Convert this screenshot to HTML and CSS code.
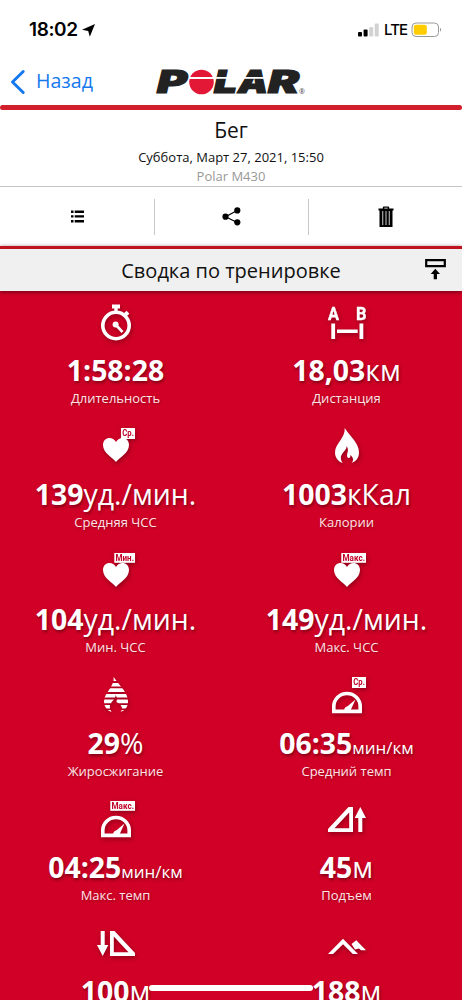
FILE: index.html
```html
<!DOCTYPE html>
<html lang="ru">
<head>
<meta charset="utf-8">
<title>Polar</title>
<link rel="stylesheet" href="styles.css">
</head>
<body>
<div class="screen">
  <div class="status">
    <div class="clock"><span class="time">18:02</span>
      <svg width="13" height="13" viewBox="0 0 13 13"><path d="M13 0L7.8 12.8L6.2 7L0 5.8Z"/></svg>
    </div>
    <div class="signal">
      <svg width="21" height="14" viewBox="0 0 21 14"><rect y="9" width="4" height="4.5" rx="1"/><rect x="5.6" y="6.5" width="4" height="7" rx="1"/><rect class="dim" x="11.2" y="4" width="4" height="9.5" rx="1"/><rect class="dim" x="16.7" y="0.5" width="4" height="13" rx="1"/></svg>
      <span class="lte">LTE</span>
      <svg width="31" height="16" viewBox="0 0 31 16"><rect class="batt" x="1" y="1" width="26.5" height="13.5" rx="4"/><rect class="charge" x="2.8" y="2.8" width="13" height="10" rx="2"/><path class="tip" d="M29 5.8Q31 7.7 29 9.8Z"/></svg>
    </div>
  </div>
  <div class="nav">
    <div class="back">
      <svg width="16" height="26" viewBox="0 0 16 26"><path d="M13.2 2.5L2.5 13L13.2 23.5"/></svg>
      <span>Назад</span>
    </div>
    <svg class="logo" width="150" height="26" viewBox="0 0 150 26">
      <text class="word" x="0" y="24" textLength="30" lengthAdjust="spacingAndGlyphs">P</text>
      <circle class="ball" cx="44.5" cy="13" r="12.3"/>
      <rect class="slit" x="32" y="8" width="25" height="2"/>
      <text class="word" x="57" y="24" textLength="23" lengthAdjust="spacingAndGlyphs">L</text>
      <text class="word" x="81" y="24" textLength="30" lengthAdjust="spacingAndGlyphs">A</text>
      <text class="word" x="111" y="24" textLength="31" lengthAdjust="spacingAndGlyphs">R</text>
      <rect class="slit" x="58" y="8" width="52" height="1.8"/>
      <text class="reg" x="142" y="25">®</text>
    </svg>
  </div>
  <div class="rule"></div>
  <div class="summary">
    <div class="sport">Бег</div>
    <div class="date">Суббота, Март 27, 2021, 15:50</div>
    <div class="device">Polar M430</div>
  </div>
  <div class="actions">
    <div class="action"><svg width="13" height="13" viewBox="0 0 13 13"><path d="M0 .5h2.5v2.4H0zM3.7.5H13v2.4H3.7zM0 5.2h2.5v2.4H0zM3.7 5.2H13v2.4H3.7zM0 10h2.5v2.4H0zM3.7 10H13v2.4H3.7z"/></svg></div>
    <div class="action"><svg width="19" height="19" viewBox="0 0 19 19"><path class="thin" d="M15.2 3.5L3.6 9.7L15.2 15.5"/><circle cx="3.5" cy="9.7" r="3.1"/><circle cx="15.3" cy="3.4" r="3.1"/><circle cx="15.3" cy="15.3" r="3.1"/></svg></div>
    <div class="action"><svg width="16" height="22" viewBox="0 0 16 22"><path d="M0.5 2.5H4.8V1.3Q4.8.5 5.8.5h4.4q1 0 1 .8V2.5h4.3V4.5H14.5V21h-13V4.5H.5zM6.3 1.7V2.5h3.4V1.7z" fill-rule="evenodd"/><path class="ribs" d="M4.7 5v14M8 5v14M11.3 5v14"/></svg></div>
  </div>
  <div class="section">
    <span>Сводка по тренировке</span>
    <svg class="collapse" width="21" height="21" viewBox="0 0 21 21"><path class="frame" d="M1.2 1.2h18.6v6h-18.6z"/><path d="M10.3 9.8L15 15h-3v5.3H8.7V15h-3z"/></svg>
  </div>
  <div class="grid">
    <div class="cell">
      <svg class="icon" viewBox="0 0 38 38"><path d="M15 .5h8v4h-2.3v3h-3.4v-3H15z"/><circle class="line" cx="19" cy="21.5" r="13.2"/><path class="line thick" d="M28 11L31 8.2"/><circle cx="18.6" cy="20.6" r="3"/><path class="hand" d="M19 21L25.5 28"/></svg>
      <div class="value"><b>1:58:28</b></div><div class="label">Длительность</div>
    </div>
    <div class="cell">
      <svg class="icon" viewBox="0 0 38 38"><text class="ab" x="0" y="15.8" textLength="11" lengthAdjust="spacingAndGlyphs">A</text><text class="ab" x="28" y="15.8" textLength="10.5" lengthAdjust="spacingAndGlyphs">B</text><path d="M3.3 19.5h3.8V35H3.3zM31.5 19.5h3.8V35h-3.8zM9 25.5h20.7v3.6H9z"/></svg>
      <div class="value"><b>18,03</b>км</div><div class="label">Дистанция</div>
    </div>
    <div class="cell">
      <svg class="icon" viewBox="0 0 38 38"><path d="M19 34C15.5 29.5 6 25 6 17C6 9 15.5 7.5 19 14C22.5 7.5 32 9 32 17C32 25 22.5 29.5 19 34Z"/><rect x="24" y="0" width="14" height="11"/><text class="tag" x="25.3" y="8.3" textLength="11.6" lengthAdjust="spacingAndGlyphs">Ср.</text></svg>
      <div class="value"><b>139</b>уд./мин.</div><div class="label">Средняя ЧСС</div>
    </div>
    <div class="cell">
      <svg class="icon" viewBox="0 0 38 38"><path d="M16.7 0C17.5 10 7 15.5 7 24.5C7 29.5 10 33.5 14.5 35C11.5 29.5 13 27 16 23.5C18 21.3 18.6 20 18.6 18C20.5 21 20 23 19.4 25C18.5 28.5 19.5 30 20.7 30C22.4 30 22.6 28.5 22.3 27C26 30 25.5 33 23.5 35C28 33.5 31 30 31 24.5C31 15 22.5 9 16.7 0Z"/></svg>
      <div class="value"><b>1003</b>кКал</div><div class="label">Калории</div>
    </div>
    <div class="cell">
      <svg class="icon" viewBox="0 0 38 38"><path d="M19 34C15.5 29.5 6 25 6 17C6 9 15.5 7.5 19 14C22.5 7.5 32 9 32 17C32 25 22.5 29.5 19 34Z"/><rect x="17.3" y="0" width="20.7" height="9.8"/><text class="tag" x="18.5" y="8" textLength="18.5" lengthAdjust="spacingAndGlyphs">Мин.</text></svg>
      <div class="value"><b>104</b>уд./мин.</div><div class="label">Мин. ЧСС</div>
    </div>
    <div class="cell">
      <svg class="icon" viewBox="0 0 38 38"><path d="M19 34C15.5 29.5 6 25 6 17C6 9 15.5 7.5 19 14C22.5 7.5 32 9 32 17C32 25 22.5 29.5 19 34Z"/><rect x="13.3" y="0" width="24.7" height="9.8"/><text class="tag" x="14.5" y="8" textLength="22.5" lengthAdjust="spacingAndGlyphs">Макс.</text></svg>
      <div class="value"><b>149</b>уд./мин.</div><div class="label">Макс. ЧСС</div>
    </div>
    <div class="cell">
      <svg class="icon" viewBox="0 0 38 38"><clipPath id="flame"><path d="M16.7 0C17.5 10 7 15.5 7 24.5C7 29.5 10 33.5 14.5 35C11.5 29.5 13 27 16 23.5C18 21.3 18.6 20 18.6 18C20.5 21 20 23 19.4 25C22 26 22.6 28.5 22.3 27C26 30 25.5 33 23.5 35C28 33.5 31 30 31 24.5C31 15 22.5 9 16.7 0Z"/></clipPath><path clip-path="url(#flame)" d="M5 0h28v4H5zM5 6h28v3.6H5zM5 11.3h28v3.8H5zM5 17h28v3.6H5zM5 22.5h28v3.7H5zM5 28h28v3.5H5zM5 33h28v3H5z"/></svg>
      <div class="value"><b>29</b>%</div><div class="label">Жиросжигание</div>
    </div>
    <div class="cell">
      <svg class="icon" viewBox="0 0 38 38"><path class="line" d="M5.8 34.4V29.5A13.2 13 0 0 1 32.2 29.5V34.4Z"/><path d="M27.5 22.5L22.5 33.5H16.2C16 30.7 18 29.8 19.5 29.2Z"/><rect x="24" y="0" width="14" height="11"/><text class="tag" x="25.3" y="8.3" textLength="11.6" lengthAdjust="spacingAndGlyphs">Ср.</text></svg>
      <div class="value"><b>06:35</b><span class="pace">мин/км</span></div><div class="label">Средний темп</div>
    </div>
    <div class="cell">
      <svg class="icon" viewBox="0 0 38 38"><path class="line" d="M5.8 34.4V29.5A13.2 13 0 0 1 32.2 29.5V34.4Z"/><path d="M27.5 22.5L22.5 33.5H16.2C16 30.7 18 29.8 19.5 29.2Z"/><rect x="13.3" y="0" width="24.7" height="9.8"/><text class="tag" x="14.5" y="8" textLength="22.5" lengthAdjust="spacingAndGlyphs">Макс.</text></svg>
      <div class="value"><b>04:25</b><span class="pace">мин/км</span></div><div class="label">Макс. темп</div>
    </div>
    <div class="cell">
      <svg class="icon" viewBox="0 0 38 38"><path fill-rule="evenodd" d="M0 31V28L20.5 6H25V31ZM6.5 27.2H21.2V11.5Z"/><path d="M32.3 6L38 17h-3.7v14h-4V17h-3.6z"/></svg>
      <div class="value"><b>45</b>м</div><div class="label">Подъем</div>
    </div>
    <div class="cell">
      <svg class="icon" viewBox="0 0 38 38"><path fill-rule="evenodd" d="M13 6H17.5L38 28V31H13ZM16.8 11.5V27.2H31.5Z"/><path d="M5.7 31L0 20h3.7V6h4v14h3.6z"/></svg>
      <div class="value"><b>100</b>м</div>
    </div>
    <div class="cell">
      <svg class="icon" viewBox="0 0 38 38"><path d="M0 29L15 13.8L30 29H24.8L15 19.3L5 29ZM23.5 19L28.3 15.3L38 25.2H33L31 23.5L27 24.5Z"/></svg>
      <div class="value"><b>188</b>м</div>
    </div>
  </div>
  <div class="home"></div>
</div>
</body>
</html>
```
FILE: styles.css
```css
* { box-sizing: border-box; }
body { margin: 0; background: #fff; font-family: "Open Sans", "Noto Sans", sans-serif; color: #111; }
.screen { position: relative; width: 462px; height: 1000px; overflow: hidden; display: flex; flex-direction: column; }
svg { display: block; flex: none; }
.status { height: 60px; display: flex; justify-content: space-between; padding: 18px 20px 0 29px; }
.clock, .signal { display: flex; align-items: center; height: 24px; }
.clock { gap: 4px; }
.time { font: 600 19px/24px Inter, sans-serif; letter-spacing: -0.4px; color: #000; }
.signal { gap: 5px; }
.lte { font: 500 15px/24px Inter, sans-serif; letter-spacing: -0.9px; width: 22px; color: #000; }
.dim { fill: #d2d2d2; }
.batt { fill: #fff; stroke: #999; }
.charge { fill: #fc0; }
.tip { fill: #888; }
.nav { height: 45px; display: flex; align-items: center; padding: 0 0 1px 10px; }
.back { width: 147px; display: flex; align-items: center; gap: 10px; color: #1479ee; font-size: 19.6px; }
.back span { line-height: 24px; padding-bottom: 2px; }
.back path { fill: none; stroke: #1479ee; stroke-width: 3; stroke-linecap: round; stroke-linejoin: round; }
.logo { overflow: visible; }
.word { font: italic 900 31px Inter, sans-serif; fill: #222; stroke: #222; stroke-width: 1.2; }
.ball { fill: #e31837; }
.slit { fill: #fff; }
.reg { font: 7px "Open Sans", sans-serif; fill: #444; }
.rule { height: 5px; border-radius: 3px; background: #d31f2b; flex: none; }
.summary { height: 77px; border-bottom: 1px solid #c2c6c4; text-align: center; flex: none; padding-top: 6px; }
.sport { font-size: 21px; line-height: 28px; }
.date { font-size: 13px; line-height: 26px; }
.device { font-size: 13px; line-height: 12px; color: #999; }
.actions { height: 59px; display: grid; grid-template-columns: repeat(3, 1fr); align-items: center; flex: none; }
.action { height: 36px; display: flex; align-items: center; justify-content: center; }
.action + .action { border-left: 1px solid #c8c8c8; }
.thin { fill: none; stroke: #000; stroke-width: 1.2; }
.ribs { stroke: #aaa; stroke-width: 1.2; }
.section { position: relative; height: 45px; border-top: 3px solid #c1121f; background: #f0f0f0; display: flex; align-items: center; justify-content: center; font-size: 20px; flex: none; z-index: 1; box-shadow: 0 1px 4px rgba(60,0,10,.7); }
.collapse { position: absolute; right: 16px; top: 10px; }
.frame { fill: none; stroke: #000; stroke-width: 2.2; }
.grid { flex: 1; min-height: 0; overflow: hidden; background: #d00026; color: #fff; display: grid; grid-template-columns: 1fr 1fr; grid-auto-rows: 124.3px; }
.cell { display: flex; flex-direction: column; align-items: center; padding-top: 13px; }
.icon { width: 38px; height: 38px; overflow: visible; fill: #fff; filter: drop-shadow(1px 2px 2px rgba(80,0,15,.5)); }
.line { fill: none; stroke: #fff; stroke-width: 3.6; }
.thick { stroke-width: 4; }
.hand { stroke: #fff; stroke-width: 2.6; }
.ab { font: bold 19px Roboto, sans-serif; stroke: #fff; stroke-width: .4; }
.tag { font: bold 9px Roboto, sans-serif; fill: #c00026; }
.value { font-size: 28.4px; line-height: 38px; height: 38px; margin-top: 9px; font-weight: 400; white-space: nowrap; text-shadow: 1px 2px 3px rgba(80,0,15,.6); }
.value b { font-weight: 700; }
.pace { font-size: 17px; line-height: 1; }
.label { font-size: 13px; line-height: 18px; color: #ffe3e6; text-shadow: 1px 1px 2px rgba(80,0,15,.4); }
.home { position: absolute; left: 149px; top: 985px; width: 164px; height: 6px; border-radius: 3px; background: #fff; z-index: 2; }
```
